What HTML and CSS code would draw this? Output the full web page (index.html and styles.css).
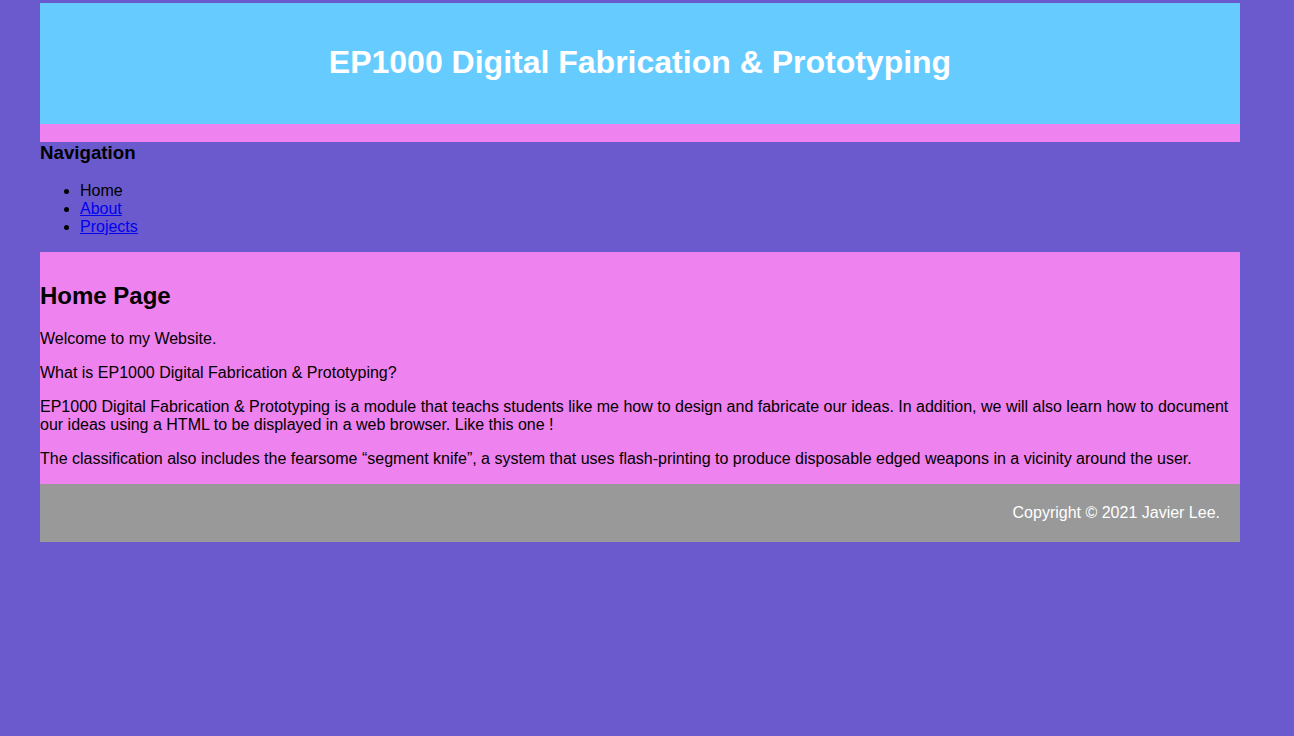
FILE: index.html
```html
<!DOCTYPE html>
<html lang="en">
<head>
<meta charset="utf-8">
<title>EP1000 Digital Fabrication &amp; Prototyping</title>
<link rel="stylesheet" href="styles.css">
</head>
<body>
<div class="wrapper">
  <header class="site-header">
    <h1 class="site-title">EP1000 Digital Fabrication &amp; Prototyping</h1>
  </header>
  <div class="accent-bar"></div>
  <nav class="site-nav">
    <h3 class="nav-title">Navigation</h3>
    <ul class="nav-list">
      <li>Home</li>
      <li><a href="#">About</a></li>
      <li><a href="#">Projects</a></li>
    </ul>
  </nav>
  <main class="content">
    <h2 class="content-title">Home Page</h2>
    <p>Welcome to my Website.</p>
    <p>What is EP1000 Digital Fabrication &amp; Prototyping?</p>
    <p>EP1000 Digital Fabrication &amp; Prototyping is a module that teachs students like me how to design and fabricate our ideas. In addition, we will also learn how to document our ideas using a HTML to be displayed in a web browser. Like this one !</p>
    <p>The classification also includes the fearsome “segment knife”, a system that uses flash-printing to produce disposable edged weapons in a vicinity around the user.</p>
  </main>
  <footer class="site-footer">Copyright © 2021 Javier Lee.</footer>
</div>
</body>
</html>
```
FILE: styles.css
```css
html, body {
  margin: 0;
  padding: 0;
}
body {
  background: #6a5acd;
  font-family: "Liberation Sans", Arial, sans-serif;
  font-size: 16px;
  color: #000;
}
.wrapper {
  width: 1200px;
  margin: 3px 0 0 40px;
}
.site-header {
  background: #66ccff;
  padding: 41px 0 43px;
  text-align: center;
}
.site-title {
  margin: 0;
  font-size: 32px;
  font-weight: bold;
  color: #fff;
}
.accent-bar {
  background: #ee82ee;
  height: 18px;
}
.site-nav {
  display: flow-root;
}
.nav-title {
  margin: 0 0 17.7px;
  font-size: 18.72px;
}
.nav-list {
  margin: 0 0 16px;
  padding-left: 40px;
}
.nav-list a {
  color: #0000ee;
}
.content {
  display: flow-root;
  background: #ee82ee;
  padding-top: 10px;
}
.content-title {
  font-size: 24px;
  margin: 19.92px 0;
}
.content p {
  margin: 16px 0;
}
.site-footer {
  background: #999999;
  color: #fff;
  text-align: right;
  padding: 20px 20px;
}
```
